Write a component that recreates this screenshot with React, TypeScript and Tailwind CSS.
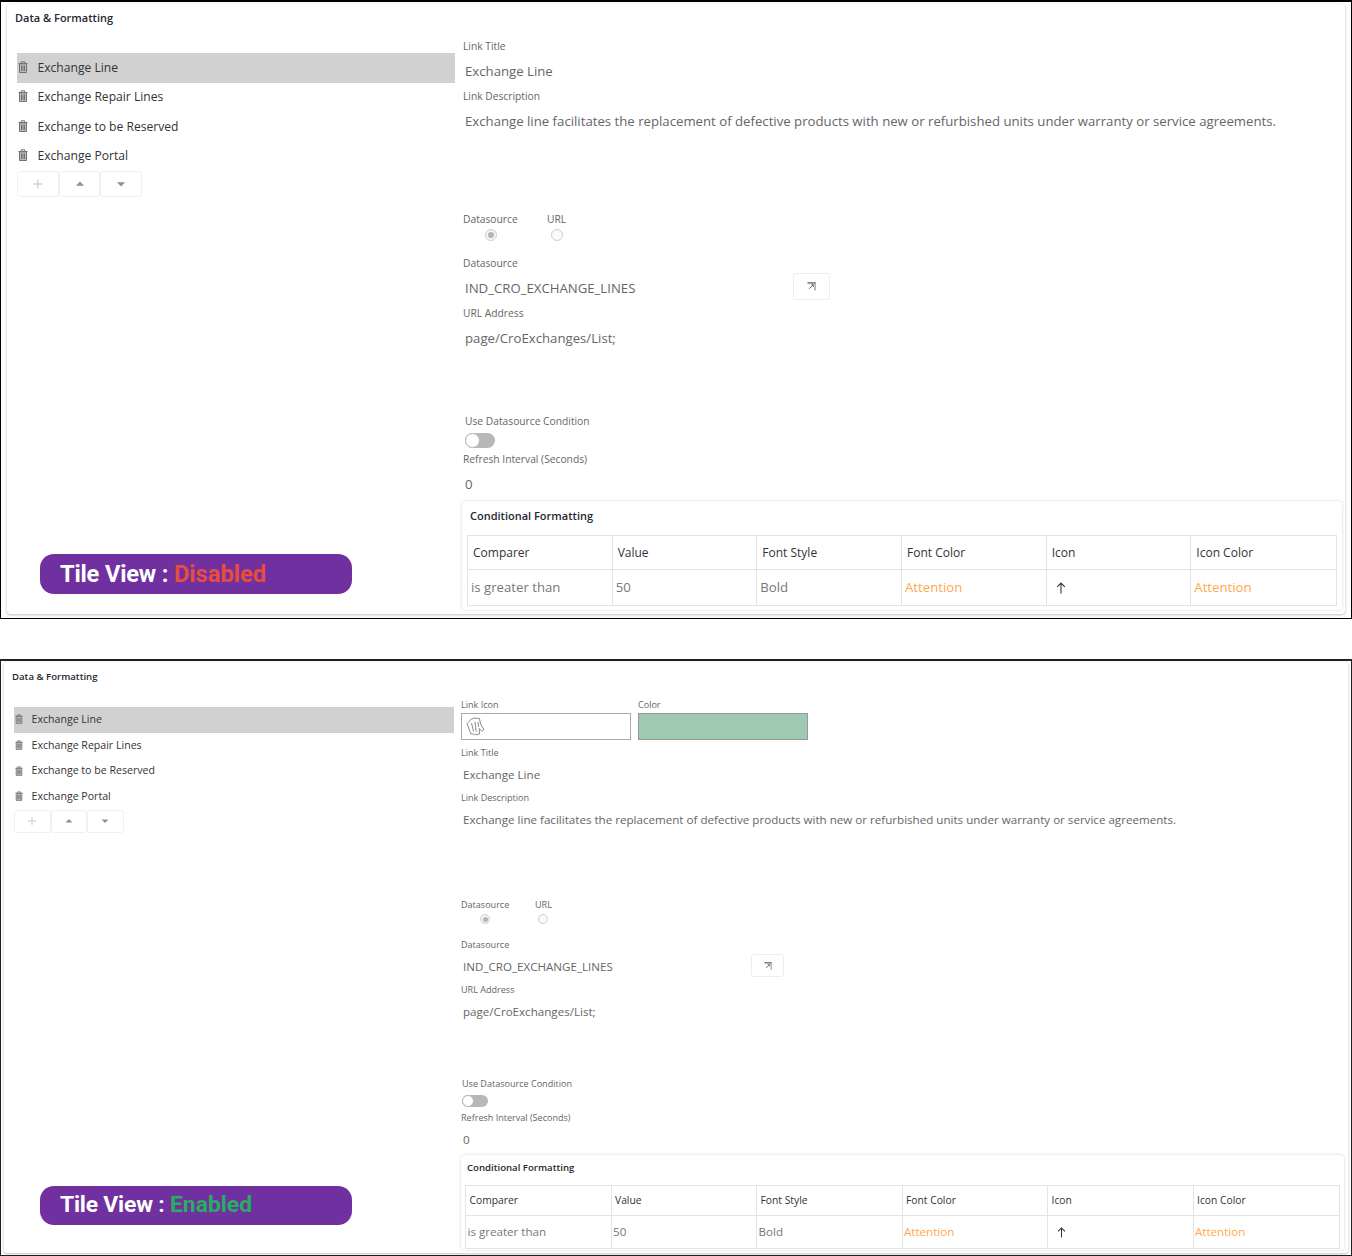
import React from "react";

type Theme = {
  section: string; card: string; title: string; titleGap: string; leftCol: string; rightCol: string;
  row: string; rowText: string; trash: string; trashGap: string; tools: string; tool: string; toolIcon: string;
  label: string; value: string; valueH: string; desc: string; radios: string; radioGap: string; radio: string;
  dsRow: string; extBtn: string; extIcon: string; url: string; useLabel: string; toggle: string; knob: string; cfCard: string; cfTitle: string;
  th: string; td: string; arrow: string; badge: string; badgeText: string; radioInner: string; radioWrap: string; radioWrap2: string;
};

const p1: Theme = {
  section: "h-[619px] border border-black border-t-[2px]",
  card: "mx-[6px] mt-[2px] h-[610px] pl-[10px] pr-[5px]",
  title: "h-[28px] text-[11px] leading-[28px] ml-[-2px]",
  titleGap: "pt-[21px]",
  leftCol: "w-[438px] mr-[8px]",
  rightCol: "w-[878px] mt-[-15px]",
  row: "h-[29.5px]",
  rowText: "text-[12.1px]",
  trash: "w-[10px] h-[12px] mb-[2px]",
  trashGap: "w-[20.5px]",
  tools: "h-[26px]",
  tool: "w-[41.7px] h-[26px]",
  toolIcon: "w-[12px] h-[12px]",
  label: "text-[10.25px] leading-[16px]",
  value: "text-[13.2px] leading-[34px] pl-[2px]",
  valueH: "h-[34px]",
  desc: "h-[107px]",
  radios: "h-[28px] pt-[2px]",
  radioGap: "w-[84px]",
  radio: "w-[12px] h-[12px]",
  radioInner: "w-[6px] h-[6px]",
  radioWrap: "w-[56px]",
  radioWrap2: "w-[76px]",
  dsRow: "w-[330px]",
  extBtn: "w-[37px] h-[27px] mt-[2px]",
  extIcon: "w-[9px] h-[9px]",
  url: "h-[92px]",
  useLabel: "pl-[2px]",
  toggle: "w-[30px] h-[15px] ml-[2px] mt-[4px] mb-[3px]",
  knob: "w-[15px] h-[15px]",
  cfCard: "ml-[-1px] w-[880px] h-[109px] px-[5px]",
  cfTitle: "h-[34px] pl-[3px] text-[11px] leading-[30px]",
  th: "h-[34px] text-[12px] pl-[5px]",
  td: "h-[35px] text-[13.2px] pl-[3px]",
  arrow: "w-[12px] h-[12px] ml-[5px]",
  badge: "left-[39px] top-[552px] h-[40px] pt-[1px]",
  badgeText: "text-[23.7px] pl-[20px]",
};

const p2: Theme = {
  section: "h-[597px] border border-[#222222] border-t-[2px] mt-[40px]",
  card: "mx-[3px] mt-[1px] h-[591px] pl-[10px] pr-[3px]",
  title: "h-[30px] text-[9.6px] leading-[30px] ml-[-2px]",
  titleGap: "pt-[15px]",
  leftCol: "w-[440px] mr-[7px]",
  rightCol: "w-[884px] mt-[-9px]",
  row: "h-[25.7px]",
  rowText: "text-[10.6px]",
  trash: "w-[8px] h-[10px] mb-[1px]",
  trashGap: "w-[17.5px]",
  tools: "h-[23px]",
  tool: "w-[36.5px] h-[23px]",
  toolIcon: "w-[10px] h-[10px]",
  label: "text-[9.05px] leading-[14px]",
  value: "text-[11.6px] leading-[30px] pl-[2px]",
  valueH: "h-[31px]",
  desc: "h-[93px]",
  radios: "h-[26px] pt-[2px]",
  radioGap: "w-[74px]",
  radio: "w-[10px] h-[10px]",
  radioInner: "w-[5px] h-[5px]",
  radioWrap: "w-[48px]",
  radioWrap2: "w-[68px]",
  dsRow: "w-[290px]",
  extBtn: "w-[33px] h-[23px] mt-[2px]",
  extIcon: "w-[8px] h-[8px]",
  url: "h-[80px]",
  useLabel: "pl-[1px]",
  toggle: "w-[26px] h-[12px] ml-[1px] mt-[4px] mb-[4px]",
  knob: "w-[12px] h-[12px]",
  cfCard: "w-[883px] h-[95px] mt-[-1px] px-[4px]",
  cfTitle: "h-[30px] pl-[2px] text-[9.6px] leading-[26px]",
  th: "h-[30px] text-[10.3px] pl-[3.5px]",
  td: "h-[32px] text-[11.6px] pl-[1.5px]",
  arrow: "w-[11px] h-[11px] ml-[6px]",
  badge: "left-[39px] top-[525px] h-[39px]",
  badgeText: "text-[22.9px] pl-[20px]",
};

const font = "font-['Open_Sans',sans-serif]";

function Trash({ className }: { className: string }) {
  return (
    <svg viewBox="0 0 10 12" className={className} fill="none" stroke="#74706c" strokeWidth="1">
      <path d="M0.5 2.5h9M3.3 2.5V0.8h3.4v1.7" />
      <path d="M1.5 2.8h7v8.7h-7z" fill="#c2bebb" />
      <path d="M3.5 4.5v5.5M5 4.5v5.5M6.5 4.5v5.5" />
    </svg>
  );
}

function Hand() {
  return (
    <svg viewBox="0 0 20 20" className="w-[20px] h-[20px] ml-[4px]" fill="#ffffff" stroke="#8a8a8a" strokeWidth="1" strokeLinejoin="round">
      <path d="M1 6.5 5.5 2l3-1 5 .5 1 5.5 3.5 5.5-2 1.8-2.8-2.8 .3 5.5-2.5.8-1.2-.8-1.3.8-1.7-1-1.8.2-1-2.5z" />
      <path d="M5.5 6l2 8.5M9 5l1.2 9.5M12 5l.6 5" />
    </svg>
  );
}

function ExtIcon({ className }: { className: string }) {
  return (
    <svg viewBox="0 0 10 10" className={className} fill="none">
      <path d="M0.5 1h9" stroke="#6b6b6b" strokeWidth="1.6" />
      <path d="M9 1v8.5" stroke="#6f8fb5" strokeWidth="1.2" />
      <path d="M7 3 2.5 7.5" stroke="#666666" strokeWidth="1.1" />
      <path d="M4.5 3h2.6v2.6" stroke="#666666" strokeWidth="0.9" />
    </svg>
  );
}

function Panel({ t, extra, state, stateClass }: { t: Theme; extra?: React.ReactNode; state: string; stateClass: string }) {
  const items = ["Exchange Line", "Exchange Repair Lines", "Exchange to be Reserved", "Exchange Portal"];
  const heads = ["Comparer", "Value", "Font Style", "Font Color", "Icon", "Icon Color"];
  return (
    <section className={`relative bg-white ${t.section} ${font}`}>
      <div className={`bg-white rounded-[4px] shadow-[0_1px_3px_rgba(0,0,0,0.25)] ${t.card}`}>
        <div className={`font-semibold text-[#1f2733] ${t.title}`}>Data &amp; Formatting</div>
        <div className={`flex ${t.titleGap}`}>
          <div className={`shrink-0 ${t.leftCol}`}>
            {items.map((it, i) => (
              <div key={it} className={`flex items-center ${t.row} ${i === 0 ? "bg-[#d1d1d1]" : ""}`}>
                <div className={`flex items-center pl-[1px] shrink-0 ${t.trashGap}`}>
                  <Trash className={t.trash} />
                </div>
                <span className={`text-[#333333] font-medium ${t.rowText}`}>{it}</span>
              </div>
            ))}
            <div className={`flex ${t.tools}`}>
              <div className={`flex items-center justify-center border border-[#f0f0f0] rounded-[3px] ${t.tool}`}>
                <svg viewBox="0 0 10 10" className={t.toolIcon} stroke="#c4c4c4" strokeWidth="0.9" fill="none"><path d="M5 1v8M1 5h8" /></svg>
              </div>
              <div className={`flex items-center justify-center border border-[#f0f0f0] rounded-[3px] ${t.tool}`}>
                <svg viewBox="0 0 10 10" className={t.toolIcon} fill="#8f8f8f"><path d="M5 3 8.4 6.4H1.6z" /></svg>
              </div>
              <div className={`flex items-center justify-center border border-[#f0f0f0] rounded-[3px] ${t.tool}`}>
                <svg viewBox="0 0 10 10" className={t.toolIcon} fill="#8f8f8f"><path d="M5 7 1.6 3.6h6.8z" /></svg>
              </div>
            </div>
          </div>

          <div className={`shrink-0 ${t.rightCol}`}>
            {extra}
            <div className={`text-[#666666] ${t.label}`}>Link Title</div>
            <div className={`text-[#666666] ${t.value} ${t.valueH}`}>Exchange Line</div>
            <div className={`text-[#666666] ${t.label}`}>Link Description</div>
            <div className={`text-[#666666] ${t.value} ${t.desc}`}>
              Exchange line facilitates the replacement of defective products with new or refurbished units under warranty or service agreements.
            </div>
            <div className={`flex text-[#666666] ${t.label}`}>
              <span className={t.radioGap}>Datasource</span>
              <span>URL</span>
            </div>
            <div className={`flex items-start ${t.radios}`}>
              <div className={`flex justify-center ${t.radioWrap}`}>
                <span className={`flex items-center justify-center rounded-full border border-[#cfcfcf] bg-[#f4f4f4] ${t.radio}`}>
                  <span className={`block rounded-full bg-[#b5b5b5] ${t.radioInner}`} />
                </span>
              </div>
              <div className={`flex justify-center ${t.radioWrap2}`}>
                <span className={`block rounded-full border border-[#cfcfcf] bg-[#fafafa] ${t.radio}`} />
              </div>
            </div>
            <div className={`text-[#666666] ${t.label}`}>Datasource</div>
            <div className="flex">
              <div className={`text-[#666666] ${t.value} ${t.valueH} ${t.dsRow}`}>IND_CRO_EXCHANGE_LINES</div>
              <div className={`flex items-center justify-center border border-[#eeeeee] rounded-[3px] ${t.extBtn}`}>
                <ExtIcon className={t.extIcon} />
              </div>
            </div>
            <div className={`text-[#666666] ${t.label}`}>URL Address</div>
            <div className={`text-[#666666] ${t.value} ${t.url}`}>page/CroExchanges/List;</div>
            <div className={`text-[#666666] ${t.label} ${t.useLabel}`}>Use Datasource Condition</div>
            <div className={`relative rounded-full bg-[#b8b8b8] ${t.toggle}`}>
              <div className={`rounded-full bg-white border border-[#b8b8b8] ${t.knob}`} />
            </div>
            <div className={`text-[#666666] ${t.label}`}>Refresh Interval (Seconds)</div>
            <div className={`text-[#666666] ${t.value} ${t.valueH}`}>0</div>
            <div className={`bg-white rounded-[4px] shadow-[0_0_3px_rgba(0,0,0,0.18)] ${t.cfCard}`}>
              <div className={`font-semibold text-[#1f2733] ${t.cfTitle}`}>Conditional Formatting</div>
              <div className="grid grid-cols-6 border border-[#e4e4e4]">
                {heads.map((h, i) => (
                  <div key={h} className={`flex items-center text-[#333333] border-b border-[#e4e4e4] ${i < 5 ? "border-r" : ""} ${t.th}`}>{h}</div>
                ))}
                <div className={`flex items-center text-[#777777] border-r border-[#e4e4e4] ${t.td}`}>is greater than</div>
                <div className={`flex items-center text-[#777777] border-r border-[#e4e4e4] ${t.td}`}>50</div>
                <div className={`flex items-center text-[#777777] border-r border-[#e4e4e4] ${t.td}`}>Bold</div>
                <div className={`flex items-center text-[#ffa84c] border-r border-[#e4e4e4] ${t.td}`}>Attention</div>
                <div className={`flex items-center text-[#333333] border-r border-[#e4e4e4] ${t.td}`}>
                  <svg viewBox="0 0 12 12" className={t.arrow} fill="none" stroke="#333333" strokeWidth="1.1"><path d="M6 11.5V1M2.2 4.8 6 1l3.8 3.8" /></svg>
                </div>
                <div className={`flex items-center text-[#ffa84c] ${t.td}`}>Attention</div>
              </div>
            </div>
          </div>
        </div>
      </div>
      <div className={`absolute w-[312px] flex items-center rounded-[14px] bg-[#7030a0] font-['Roboto',sans-serif] font-bold text-white ${t.badge} ${t.badgeText}`}>
        <span className="tracking-[-0.2px]">Tile View :&nbsp;</span>
        <span className={stateClass}>{state}</span>
      </div>
    </section>
  );
}

export default function App() {
  return (
    <div className="w-[1352px] h-[1256px] bg-white overflow-hidden">
      <Panel t={p1} state="Disabled" stateClass="text-[#e84c3d]" />
      <Panel
        t={p2}
        state="Enabled"
        stateClass="text-[#27ae60]"
        extra={
          <div className="flex gap-[7px] mb-[6px]">
            <div>
              <div className={`text-[#666666] mb-[1px] ${p2.label}`}>Link Icon</div>
              <div className="flex items-center w-[170px] h-[27px] border border-[#aaaaaa] bg-white">
                <Hand />
              </div>
            </div>
            <div>
              <div className={`text-[#666666] mb-[1px] ${p2.label}`}>Color</div>
              <div className="w-[170px] h-[27px] border border-[#999999] bg-[#9fc9b0]" />
            </div>
          </div>
        }
      />
    </div>
  );
}
